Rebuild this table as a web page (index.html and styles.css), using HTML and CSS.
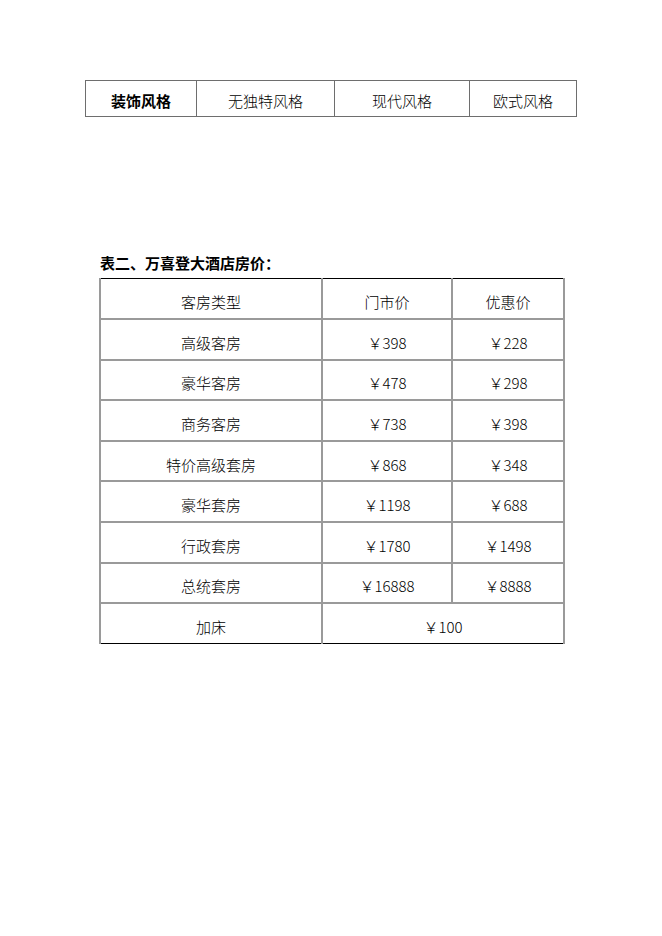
FILE: index.html
```html
<!DOCTYPE html>
<html lang="zh">
<head>
<meta charset="utf-8">
<link rel="stylesheet" href="styles.css">
</head>
<body>
<div class="page">
  <table class="style-table">
    <tr>
      <td class="c1 strong">装饰风格</td>
      <td class="c2">无独特风格</td>
      <td class="c3">现代风格</td>
      <td class="c4">欧式风格</td>
    </tr>
  </table>

  <h2 class="caption">表二、万喜登大酒店房价：</h2>

  <table class="price-table">
    <tr><td class="p1">客房类型</td><td class="p2">门市价</td><td class="p3">优惠价</td></tr>
    <tr><td>高级客房</td><td>￥398</td><td>￥228</td></tr>
    <tr><td>豪华客房</td><td>￥478</td><td>￥298</td></tr>
    <tr><td>商务客房</td><td>￥738</td><td>￥398</td></tr>
    <tr><td>特价高级套房</td><td>￥868</td><td>￥348</td></tr>
    <tr><td>豪华套房</td><td>￥1198</td><td>￥688</td></tr>
    <tr><td>行政套房</td><td>￥1780</td><td>￥1498</td></tr>
    <tr><td>总统套房</td><td>￥16888</td><td>￥8888</td></tr>
    <tr><td>加床</td><td colspan="2">￥100</td></tr>
  </table>
</div>
</body>
</html>
```

FILE: styles.css
```css
html, body {
  margin: 0;
  padding: 0;
  background: #ffffff;
}

body {
  font-family: "Noto Sans CJK SC", "Noto Sans", sans-serif;
  color: #000;
}

.page {
  width: 662px;
  height: 936px;
  padding-top: 80px;
  box-sizing: border-box;
}

table {
  border-collapse: collapse;
  table-layout: fixed;
}

td {
  padding: 0;
  text-align: center;
  font-size: 15px;
  line-height: 18px;
  font-weight: 300;
}

.style-table {
  margin-left: 85px;
  width: 491px;
}

.style-table td {
  height: 36px;
  border: 1.5px solid #6e6e6e;
  padding-top: 5px;
  box-sizing: border-box;
}

.style-table .c1 { width: 111px; }
.style-table .c2 { width: 138px; }
.style-table .c3 { width: 135px; }
.style-table .c4 { width: 107px; }

.strong {
  font-weight: 700;
}

.caption {
  margin: 136px 0 0 100px;
  font-size: 15px;
  line-height: 20px;
  font-weight: 700;
  height: 25px;
  box-sizing: border-box;
}

.price-table {
  margin-left: 99px;
  width: 464px;
}

.price-table td {
  height: 40.6px;
  border: 2px solid #9a9a9a;
  padding-top: 7px;
  box-sizing: border-box;
}

.price-table tr:first-child td {
  border-top: 1px solid #000;
}

.price-table tr:last-child td {
  border-bottom: 1px solid #000;
}

.price-table .p1 { width: 222px; }
.price-table .p2 { width: 130px; }
.price-table .p3 { width: 112px; }
```
